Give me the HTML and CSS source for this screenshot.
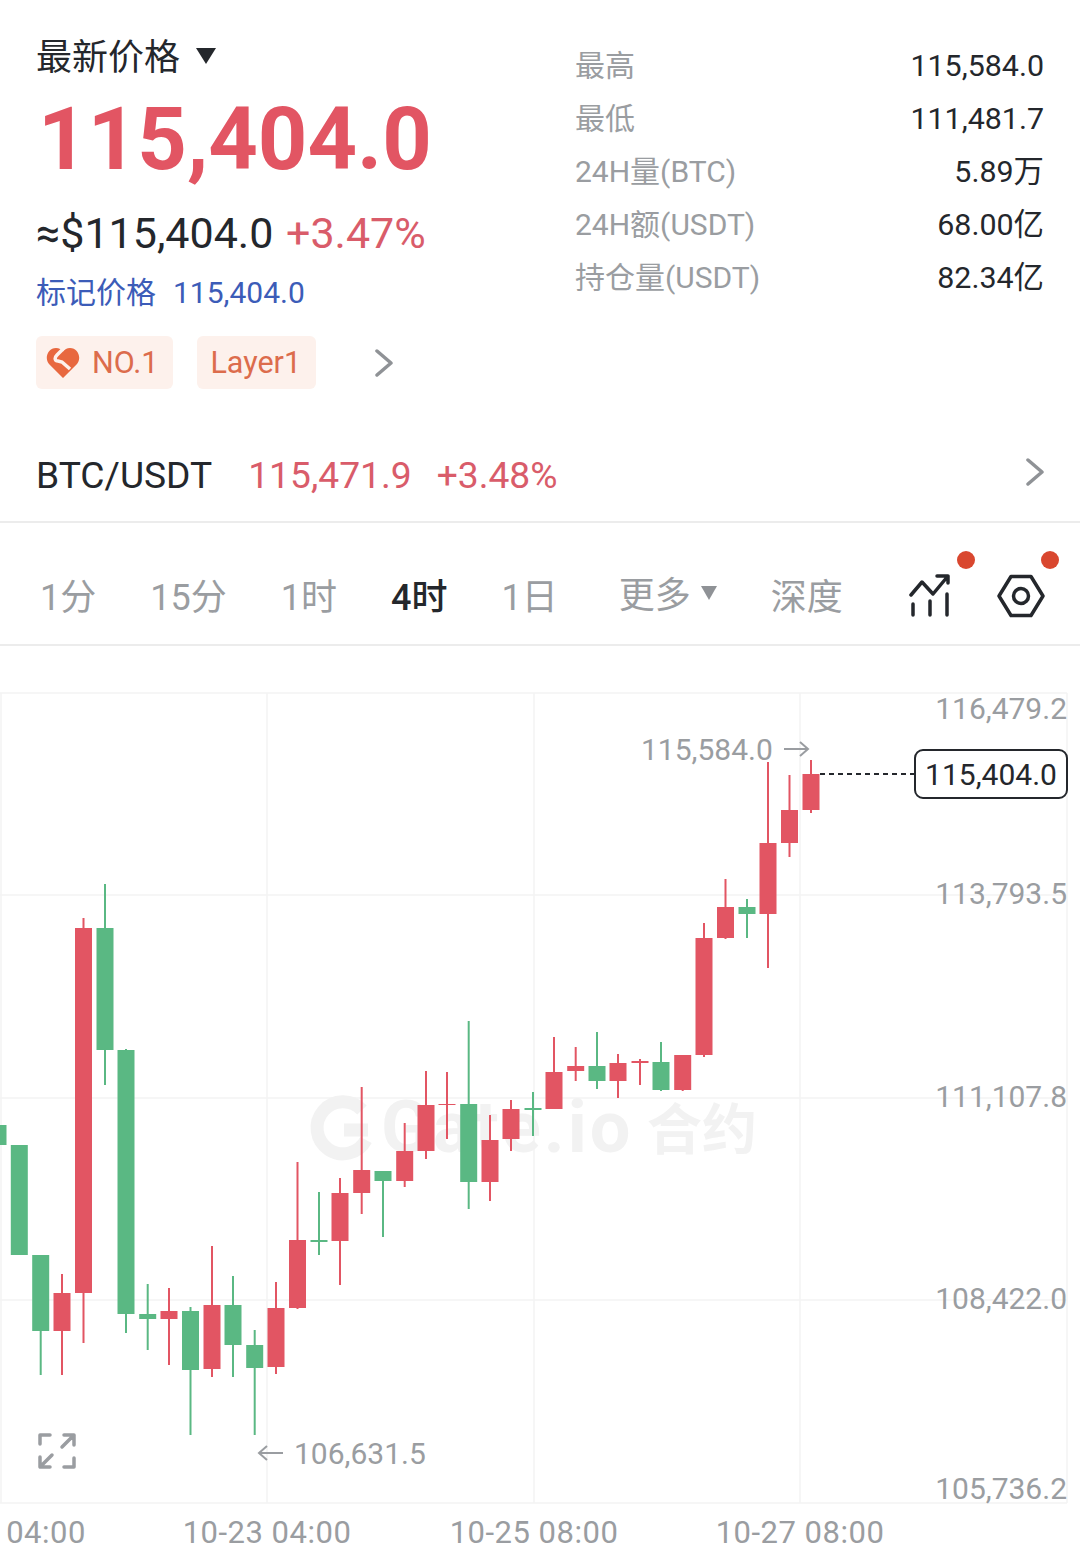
FILE: index.html
```html
<!DOCTYPE html>
<html lang="zh-CN">
<head>
  <meta charset="UTF-8">
  <title>BTC 合约行情</title>
  <link rel="stylesheet" href="styles.css">
</head>
<body>
  <section class="summary">
    <div class="summary-left">
      <div class="price-head">最新价格<span class="caret"></span></div>
      <div class="price-big">115,404.0</div>
      <div class="price-sub">≈$115,404.0 <span class="up">+3.47%</span></div>
      <div class="price-mark"><span>标记价格</span><span>115,404.0</span></div>
      <div class="tags">
        <span class="tag tag-rank">
          <svg class="tag-icon" viewBox="0 0 34 32">
            <path class="heart" d="M17 31 L3 17 C-2 11 2 1 10 1 C13 1 15.500 2.500 17 4.500 C18.500 2.500 21 1 24 1 C32 1 36 11 31 17 Z"/>
            <path class="heart-cut" d="M19 0 L11 8 C8 11 9 14 12 14 L16 15 L24 22"/>
          </svg>
          NO.1
        </span>
        <span class="tag">Layer1</span>
        <svg class="chevron tag-more" viewBox="0 0 18 28"><path d="M2 2 L16 14 L2 26"/></svg>
      </div>
    </div>
    <div class="stats">
      <div class="stat"><span>最高</span><b>115,584.0</b></div>
      <div class="stat"><span>最低</span><b>111,481.7</b></div>
      <div class="stat"><span>24H量(BTC)</span><b>5.89万</b></div>
      <div class="stat"><span>24H额(USDT)</span><b>68.00亿</b></div>
      <div class="stat"><span>持仓量(USDT)</span><b>82.34亿</b></div>
    </div>
  </section>

  <section class="pair">
    <span class="pair-name">BTC/USDT</span>
    <span class="pair-price">115,471.9</span>
    <span class="pair-change">+3.48%</span>
    <svg class="chevron pair-more" viewBox="0 0 18 28"><path d="M2 2 L16 14 L2 26"/></svg>
  </section>

  <nav class="tabs">
    <span>1分</span>
    <span>15分</span>
    <span>1时</span>
    <span class="active">4时</span>
    <span>1日</span>
    <span class="tab-more">更多<i class="caret-small"></i></span>
    <span>深度</span>
    <div class="tool tool-first">
      <svg viewBox="0 0 44 44">
        <path d="M3 21 L14 8 L25 20 L40 2 M29 2 H40 V9 M5 30 V41 M22 27 V41 M39 20 V41"/>
      </svg>
      <i class="badge"></i>
    </div>
    <div class="tool tool-hex">
      <svg viewBox="0 0 48 44">
        <path d="M2 22 L14 2.500 H34 L46 22 L34 41.500 H14 Z"/>
        <circle cx="24" cy="22" r="7.500"/>
      </svg>
      <i class="badge"></i>
    </div>
  </nav>

  <svg class="chart" id="chart" viewBox="0 646 1080 916">
    <g class="grid">
      <path d="M0 693 H1067 M0 895 H1067 M0 1098 H1067 M0 1300 H1067 M0 1503 H1067"/>
      <path d="M1 693 V1503 M267 693 V1503 M534 693 V1503 M800 693 V1503 M1067 693 V1503"/>
    </g>
    <g class="watermark">
      <path class="mark-ring" d="M362 1110 A26 26 0 1 0 366 1140 M344 1130 H368"/>
      <text x="381" y="1152" class="mark-name">Gate.io</text>
      <text x="647" y="1149" class="mark-cn">合约</text>
    </g>
    <g id="candles"></g>
    <g class="axis-y">
      <text x="1067" y="719">116,479.2</text>
      <text x="1067" y="904">113,793.5</text>
      <text x="1067" y="1107">111,107.8</text>
      <text x="1067" y="1309">108,422.0</text>
      <text x="1067" y="1499">105,736.2</text>
    </g>
    <g class="axis-x">
      <text x="46" y="1543">04:00</text>
      <text x="267" y="1543">10-23 04:00</text>
      <text x="534" y="1543">10-25 08:00</text>
      <text x="800" y="1543">10-27 08:00</text>
    </g>
    <text class="extreme" x="641" y="760">115,584.0</text>
    <path class="extreme-arrow" d="M784 749 H808 M800 742 L808 749 L800 756"/>
    <path class="extreme-arrow" d="M283 1453 H259 M267 1446 L259 1453 L267 1460"/>
    <text class="extreme" x="294" y="1464">106,631.5</text>
    <path class="last-line" d="M820 774 H915"/>
    <rect class="last-box" x="915" y="750" width="152" height="48" rx="8"/>
    <text class="last-text" x="991" y="785">115,404.0</text>
    <path class="expand" d="M40 1444 V1435 H50 M64 1435 H74 V1445 M74 1435 L62 1447 M40 1457 V1467 H50 M40 1467 L52 1455 M74 1458 V1467 H64"/>
  </svg>

  <script src="chart.js"></script>
</body>
</html>
```

FILE: styles.css
```css
* { box-sizing: border-box; }
body {
  margin: 0;
  width: 1080px;
  background: #fff;
  color: #24272c;
  font-family: Roboto, "Noto Sans CJK SC", sans-serif;
  overflow: hidden;
}

.summary {
  display: flex;
  height: 408px;
  padding: 33px 36px 0;
}
.summary-left { width: 539px; }
.price-head {
  display: flex;
  align-items: center;
  height: 42px;
  font-size: 36px;
}
.caret {
  width: 0;
  height: 0;
  margin: 4px 0 0 16px;
  border-left: 10px solid transparent;
  border-right: 10px solid transparent;
  border-top: 16px solid #24272c;
}
.price-big {
  margin: 15px 0 0 2px;
  height: 100px;
  line-height: 100px;
  font-size: 86.500px;
  font-weight: 700;
  color: #e25563;
}
.price-sub {
  margin-top: 13px;
  height: 60px;
  line-height: 60px;
  font-size: 43px;
}
.up { color: #d95c6a; margin-left: 2px; }
.price-mark {
  display: flex;
  gap: 17px;
  margin-top: 10px;
  height: 40px;
  line-height: 40px;
  font-size: 30px;
  color: #3c5cb8;
}
.tags {
  display: flex;
  align-items: center;
  gap: 24px;
  margin-top: 23px;
}
.tag {
  display: flex;
  align-items: center;
  height: 53px;
  padding: 0 15px 0 13px;
  border-radius: 6px;
  background: #fdf1ec;
  color: #dc6c4c;
  font-size: 30.500px;
}
.tag-rank { gap: 12px; padding-left: 10px; }
.tag-icon { width: 34px; height: 32px; }
.heart { fill: #e8683f; }
.heart-cut { fill: none; stroke: #fdf1ec; stroke-width: 3.500; }
.chevron { fill: none; }
.chevron path {
  fill: none;
  stroke: #8f9296;
  stroke-width: 3.500;
  stroke-linecap: round;
  stroke-linejoin: round;
}
.tag-more { width: 18px; height: 28px; margin-left: 35px; }

.stats { flex: 1; padding-top: 6px; }
.stat {
  display: flex;
  justify-content: space-between;
  height: 53px;
  line-height: 53px;
  font-size: 30px;
  color: #9a9da1;
}
.stat b { font-weight: 400; font-size: 30.400px; color: #24272c; }

.pair {
  display: flex;
  align-items: center;
  height: 115px;
  padding: 20px 36px 0 36px;
  border-bottom: 2px solid #ececec;
  font-size: 37.200px;
}
.pair-price { margin-left: 36px; color: #d95c6a; }
.pair-change { margin-left: 25px; color: #d95c6a; }
.pair-more { width: 18px; height: 28px; margin: -5px 0 0 auto; }

.tabs {
  display: flex;
  align-items: center;
  gap: 54px;
  height: 123px;
  padding: 20px 36px 0 40px;
  border-bottom: 2px solid #ececec;
  font-size: 36px;
  color: #9a9da1;
  white-space: nowrap;
}
.tabs .active { color: #24272c; font-weight: 500; }
.tab-more { display: flex; align-items: center; gap: 10px; margin-left: 7px; margin-top: -4px; }
.caret-small {
  width: 0;
  height: 0;
  margin-top: 3px;
  border-left: 8px solid transparent;
  border-right: 8px solid transparent;
  border-top: 14px solid #8f9296;
}
.tool { position: relative; display: flex; flex: none; margin-top: 4px; }
.tool svg {
  width: 44px;
  height: 44px;
  fill: none;
  stroke: #24272c;
  stroke-width: 3.500;
  stroke-linecap: round;
  stroke-linejoin: round;
}
.tool-first { margin-left: 11px; }
.tool-hex { margin-left: -9px; }
.tool-hex svg { width: 48px; }
.badge {
  position: absolute;
  top: -23px;
  right: -23px;
  width: 18px;
  height: 18px;
  border-radius: 50%;
  background: #d9472f;
}
.tool-hex .badge { right: -14px; }

.chart { display: block; width: 1080px; height: 916px; }
.chart text { font-family: Roboto, "Noto Sans CJK SC", sans-serif; }
.grid path { fill: none; stroke: #f4f4f4; stroke-width: 1.500; }
.mark-ring { fill: none; stroke: #f2f2f2; stroke-width: 13; }
.mark-name { fill: #f2f2f2; font-size: 72px; font-weight: 700; letter-spacing: 3px; }
.mark-cn { fill: #f2f2f2; font-size: 55px; font-weight: 700; }
.axis-y text { fill: #9a9da1; font-size: 30px; text-anchor: end; }
.axis-x text { fill: #9a9da1; font-size: 31px; letter-spacing: 0.500px; text-anchor: middle; }
.extreme { fill: #9a9da1; font-size: 30px; }
.extreme-arrow { fill: none; stroke: #9a9da1; stroke-width: 2; }
.last-line { stroke: #24272c; stroke-width: 2; stroke-dasharray: 5 4; }
.last-box { fill: #fff; stroke: #24272c; stroke-width: 2; }
.last-text { fill: #24272c; font-size: 30px; text-anchor: middle; }
.expand {
  fill: none;
  stroke: #9a9da1;
  stroke-width: 3.500;
  stroke-linecap: round;
  stroke-linejoin: round;
}
.wick { stroke-width: 2; }
.wick.up-bar { stroke: #e25563; }
.wick.down-bar { stroke: #5ab883; }
.body.up-bar { fill: #e25563; }
.body.down-bar { fill: #5ab883; }
```

FILE: chart.js
```js
// [center x, wick top, body top, body bottom, wick bottom, rising?]
const bars = [
  [811, 760, 774, 810, 813, 1],
  [789.5, 775, 810, 843, 857, 1],
  [768, 762, 843, 914, 968, 1],
  [747, 899, 907, 914, 938, 0],
  [725.5, 879, 907, 938, 939, 1],
  [704, 923, 938, 1055, 1057, 1],
  [682.7, 1055, 1055, 1090, 1091, 1],
  [661, 1042, 1062, 1090, 1091, 0],
  [640, 1059, 1061, 1063, 1085, 1],
  [618, 1054, 1063, 1081, 1098, 1],
  [597, 1032, 1066, 1081, 1089, 0],
  [575.7, 1047, 1066, 1071, 1081, 1],
  [554, 1037, 1072, 1109, 1109, 1],
  [533, 1092, 1108, 1110, 1136, 0],
  [511, 1100, 1109, 1139, 1151, 1],
  [490, 1115, 1140, 1182, 1201, 1],
  [468.7, 1021, 1104, 1182, 1209, 0],
  [447, 1072, 1104, 1105, 1139, 1],
  [426, 1071, 1105, 1151, 1159, 1],
  [404.7, 1123, 1151, 1181, 1187, 1],
  [383, 1171, 1171, 1181, 1237, 0],
  [361.7, 1087, 1170, 1193, 1214, 1],
  [340, 1178, 1193, 1241, 1285, 1],
  [319, 1192, 1240, 1242, 1255, 0],
  [297.5, 1162, 1240, 1308, 1309, 1],
  [276, 1282, 1308, 1367, 1374, 1],
  [254.7, 1330, 1345, 1368, 1435, 0],
  [233, 1276, 1305, 1345, 1377, 0],
  [212, 1246, 1305, 1369, 1377, 1],
  [190.5, 1307, 1311, 1370, 1435, 0],
  [169, 1288, 1311, 1319, 1365, 1],
  [147.7, 1284, 1314, 1319, 1350, 0],
  [126, 1049, 1050, 1314, 1333, 0],
  [105, 884, 928, 1050, 1085, 0],
  [83.5, 918, 928, 1293, 1343, 1],
  [62, 1274, 1293, 1331, 1375, 1],
  [40.7, 1255, 1255, 1331, 1375, 0],
  [19.3, 1145, 1145, 1255, 1255, 0],
  [-2, 1125, 1125, 1145, 1145, 0]
];

const SVG_NS = "http://www.w3.org/2000/svg";
const group = document.getElementById("candles");

function add(tag, attrs) {
  const el = document.createElementNS(SVG_NS, tag);
  for (const key in attrs) el.setAttribute(key, attrs[key]);
  group.appendChild(el);
}

bars.forEach(([x, high, top, bottom, low, rising]) => {
  const side = rising ? "up-bar" : "down-bar";
  add("line", { x1: x, x2: x, y1: high, y2: low, class: "wick " + side });
  add("rect", { x: x - 8.5, y: top, width: 17, height: bottom - top, class: "body " + side });
});
```
